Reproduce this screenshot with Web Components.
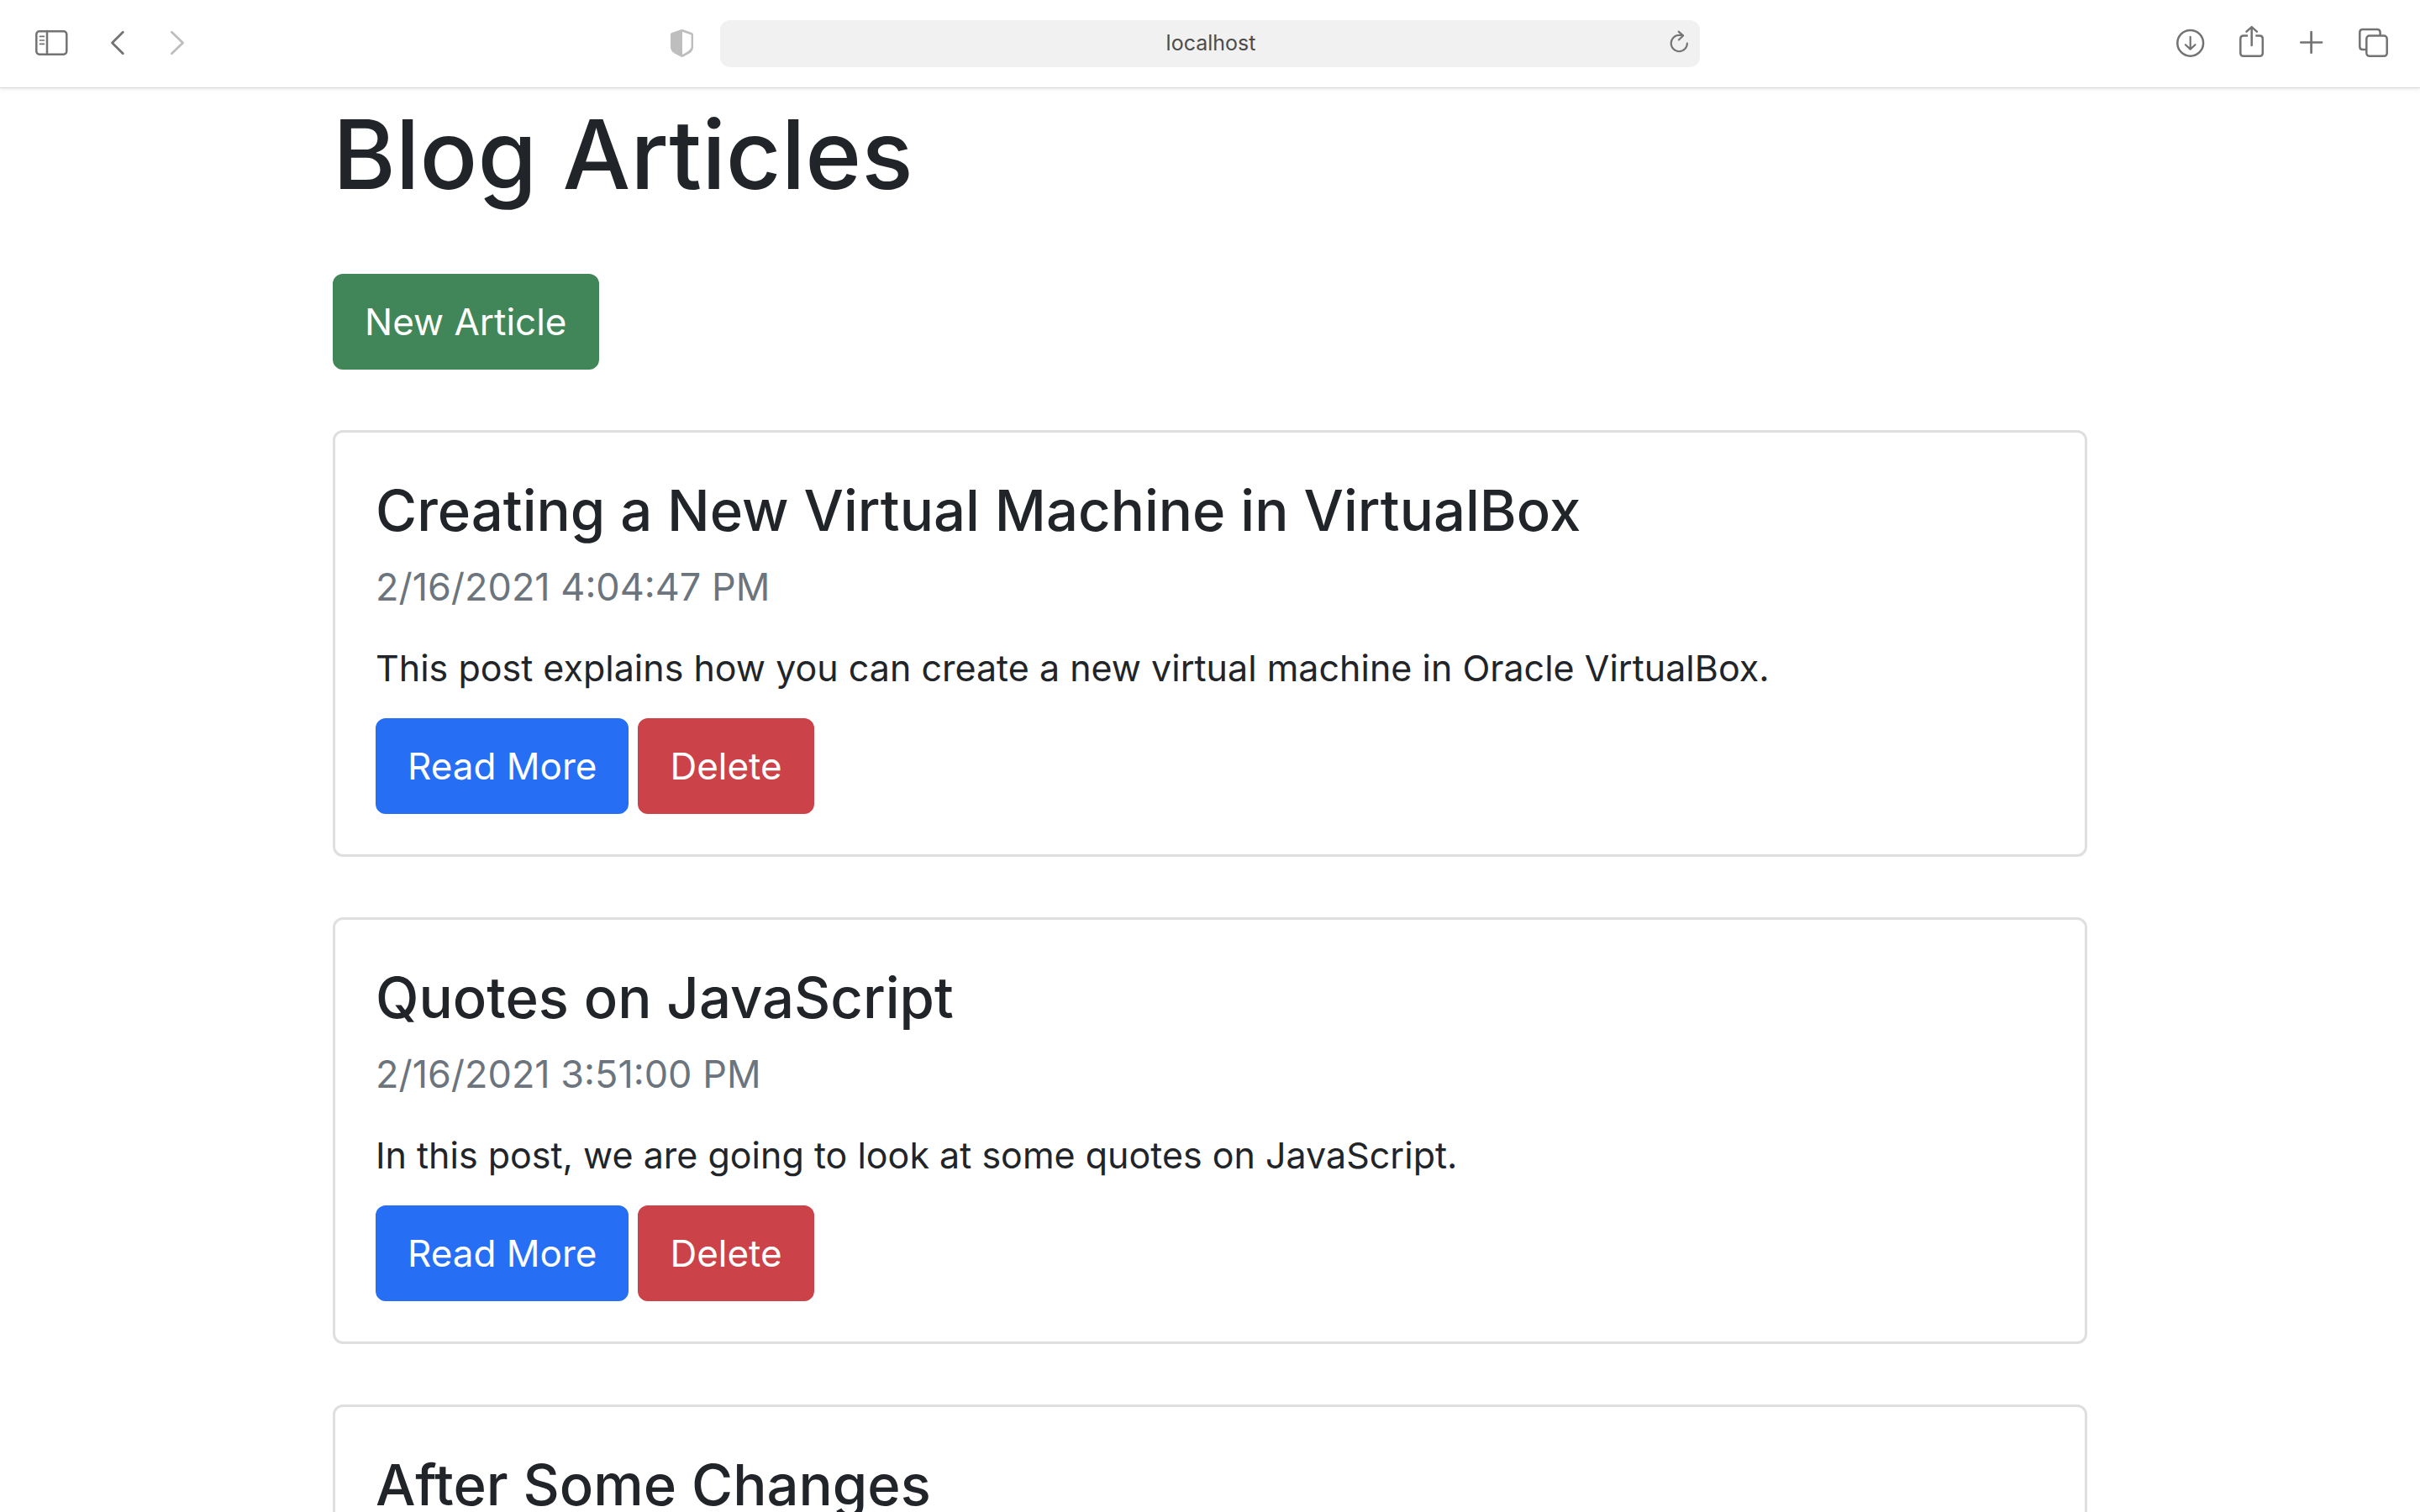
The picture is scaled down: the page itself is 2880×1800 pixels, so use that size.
<!DOCTYPE html>
<html lang="en">
<head>
<meta charset="utf-8">
<title>Blog Articles</title>
<style>
  body { margin: 0; background: #fff; color: #212529; font-family: Inter, "Liberation Sans", sans-serif; }
</style>
</head>
<body>
<blog-window>
  <browser-bar slot="bar" address="localhost"></browser-bar>
  <article-list heading="Blog Articles">
    <article-card>
      <span slot="title">Creating a New Virtual Machine in VirtualBox</span>
      <time slot="date" datetime="2021-02-16T16:04:47">2/16/2021 4:04:47 PM</time>
      <span slot="text">This post explains how you can create a new virtual machine in Oracle VirtualBox.</span>
      <fill-button slot="actions" href="#read">Read More</fill-button>
      <fill-button slot="actions" kind="danger">Delete</fill-button>
    </article-card>
    <article-card>
      <span slot="title">Quotes on JavaScript</span>
      <time slot="date" datetime="2021-02-16T15:51:00">2/16/2021 3:51:00 PM</time>
      <span slot="text">In this post, we are going to look at some quotes on JavaScript.</span>
      <fill-button slot="actions" href="#read">Read More</fill-button>
      <fill-button slot="actions" kind="danger">Delete</fill-button>
    </article-card>
    <article-card>
      <span slot="title">After Some Changes</span>
    </article-card>
  </article-list>
</blog-window>

<script>
const attach = (host, html) => { host.attachShadow({ mode: "open" }).innerHTML = html; };

/* Window: toolbar on top, page pane below, clipped at the window's edge. */
customElements.define("blog-window", class extends HTMLElement {
  constructor() {
    super();
    attach(this, `
      <style>
        :host { display: flex; flex-direction: column; height: 100vh; overflow: hidden; }
        main { flex: 1; min-height: 0; overflow: hidden; }
      </style>
      <slot name="bar"></slot>
      <main><slot></slot></main>`);
  }
});

const icons = {
  sidebar: `<rect x="11.3" y="37.3" width="36" height="27.4" rx="3.6"/><path d="M24 37v28"/><path stroke-width="1.7" d="M15.6 43.4h4.8M15.6 48h4.8M15.6 52.4h4.8"/>`,
  back: `<path stroke-width="2.8" d="M42.3 38.2 29.5 51l12.8 12.7"/>`,
  forward: `<path stroke-width="2.8" d="M28.4 38.2 41.6 51 28.4 63.7"/>`,
  shield: `<path fill="currentColor" stroke="none" fill-rule="evenodd" d="M35.2 35.2Q36.7 34.6 38.2 35.2L48.4 39Q50 39.6 50 41.2V56Q50 60.6 46 63.2L38.2 67.5Q36.7 68.3 35.2 67.5L27.2 63.2Q23 60.6 23 56V41.2Q23 39.6 24.6 39ZM37 37.7V65Q42 62.5 44.5 60.5Q47.6 58.2 47.6 56V41.4Z"/>`,
  download: `<circle cx="34.7" cy="51.3" r="15.4"/><path stroke-width="2.2" d="M34.7 43.8v14.6M28.9 53.2l5.8 5.4 5.8-5.4"/>`,
  share: `<path stroke-linecap="butt" d="M31 42.6h-4.9q-3.8 0-3.8 3.8v16.6q0 3.8 3.8 3.8h18.9q3.8 0 3.8-3.8V46.4q0-3.8-3.8-3.8h-4.7"/><path d="M35.7 54V32.5M29.5 37.6l6.2-5.5 6.2 5.5"/>`,
  plus: `<path stroke-width="2.7" d="M22.3 50.5h24.8M34.6 38.2v24.6"/>`,
  tabs: `<rect x="28.3" y="42.6" width="24.4" height="24.2" rx="3.6"/><path stroke-linecap="butt" d="M28.3 59h-4.4q-3.6 0-3.6-3.6V38.6q0-3.6 3.6-3.6h17.1q3.6 0 3.6 3.6v4"/>`,
  reload: `<path stroke-width="2.1" d="M32.9 51.5a9.6 9.7 0 1 1-9.6-9.7l4.4.4"/><path stroke-width="2.1" d="M22.7 37.6l5.4 4.8-5.2 5"/>`
};

/* One toolbar button; "name" picks the icon, "width" its box (72 by default). */
customElements.define("tool-button", class extends HTMLElement {
  connectedCallback() {
    if (this.shadowRoot) return;
    const width = this.getAttribute("width") || 72;
    attach(this, `
      <style>
        :host { display: block; flex: none; color: #737373; }
        :host([dim]) { color: #bebebe; }
        button { display: block; padding: 0; border: 0; background: none; color: inherit; }
        svg { display: block; fill: none; stroke: currentColor; stroke-linecap: round; stroke-linejoin: round; }
      </style>
      <button type="button" aria-label="${this.getAttribute("label")}">
        <svg width="${width}" height="104" viewBox="0 0 ${width} 104" stroke-width="2.5" aria-hidden="true">${icons[this.getAttribute("name")]}</svg>
      </button>`);
  }
});

customElements.define("browser-bar", class extends HTMLElement {
  connectedCallback() {
    if (this.shadowRoot) return;
    attach(this, `
      <style>
        :host { display: grid; grid-template-columns: 1fr minmax(0, 1166px) 1fr; align-items: center;
                flex: none; height: 104px; background: #fff; position: relative; z-index: 1;
                box-shadow: 0 1px 0 #d9d9d9, 0 2px 4px rgba(0, 0, 0, .1); }
        nav { display: flex; padding-left: 32px; }
        nav tool-button:last-child { margin-left: auto; margin-right: 10px; }
        .field { display: flex; align-items: center; height: 56px; border-radius: 12px; background: #f1f1f1; overflow: hidden; }
        input { flex: 1; min-width: 0; box-sizing: border-box; height: 56px; padding: 0 0 2px 50px; border: 0; outline: 0;
                background: none; font: 25px Inter, "Liberation Sans", sans-serif; color: #4c4c4c; text-align: center; }
        .tools { display: flex; justify-content: flex-end; padding-right: 20px; }
      </style>
      <nav aria-label="Navigation">
        <tool-button name="sidebar" label="Show sidebar"></tool-button>
        <tool-button name="back" label="Back"></tool-button>
        <tool-button name="forward" label="Forward" dim></tool-button>
        <tool-button name="shield" label="Privacy report" dim></tool-button>
      </nav>
      <div class="field">
        <input type="text" aria-label="Address" value="${this.getAttribute("address")}">
        <tool-button name="reload" label="Reload" width="48"></tool-button>
      </div>
      <div class="tools">
        <tool-button name="download" label="Downloads"></tool-button>
        <tool-button name="share" label="Share"></tool-button>
        <tool-button name="plus" label="New tab"></tool-button>
        <tool-button name="tabs" label="Tab overview"></tool-button>
      </div>`);
  }
});

/* Filled button; a link when it has an href, a real button otherwise. */
customElements.define("fill-button", class extends HTMLElement {
  connectedCallback() {
    if (this.shadowRoot) return;
    const href = this.getAttribute("href");
    const tag = href ? `a href="${href}"` : `button type="button"`;
    attach(this, `
      <style>
        :host { display: block; --fill: #266ff4; }
        :host([kind="success"]) { --fill: #418658; }
        :host([kind="danger"]) { --fill: #cb4249; }
        a, button { display: block; box-sizing: border-box; margin: 0; padding: 18px 35px; border: 3px solid var(--fill);
                    border-radius: 12px; background: var(--fill); color: #fff; font: 44px/72px Inter, "Liberation Sans", sans-serif;
                    text-decoration: none; white-space: nowrap; }
      </style>
      <${tag}><slot></slot></${href ? "a" : "button"}>`);
  }
});

customElements.define("article-card", class extends HTMLElement {
  constructor() {
    super();
    attach(this, `
      <style>
        :host { display: block; padding: 48px; border: 3px solid #dfdfdf; border-radius: 12px; background: #fff; }
        h2 { margin: 0 0 12px; padding-top: 2px; font-size: 67px; line-height: 86px; font-weight: 500; }
        .date, .text { min-height: 72px; margin: 0 0 24px; line-height: 72px; }
        .date { font-size: 45px; color: #6c757d; }
        .text { font-size: 43px; }
        .actions { display: flex; gap: 11px; min-height: 114px; }
      </style>
      <h2><slot name="title"></slot></h2>
      <div class="date"><slot name="date"></slot></div>
      <p class="text"><slot name="text"></slot></p>
      <div class="actions"><slot name="actions"></slot></div>`);
  }
});

customElements.define("article-list", class extends HTMLElement {
  connectedCallback() {
    if (this.shadowRoot) return;
    attach(this, `
      <style>
        :host { display: flex; flex-direction: column; gap: 72px; max-width: 2088px; margin: 0 auto; padding-top: 10px; }
        h1 { margin: 0; font-size: 114px; line-height: 140px; font-weight: 500; }
        .new { display: flex; }
      </style>
      <h1>${this.getAttribute("heading")}</h1>
      <div class="new"><fill-button kind="success" href="#new">New Article</fill-button></div>
      <slot></slot>`);
  }
});
</script>
</body>
</html>
